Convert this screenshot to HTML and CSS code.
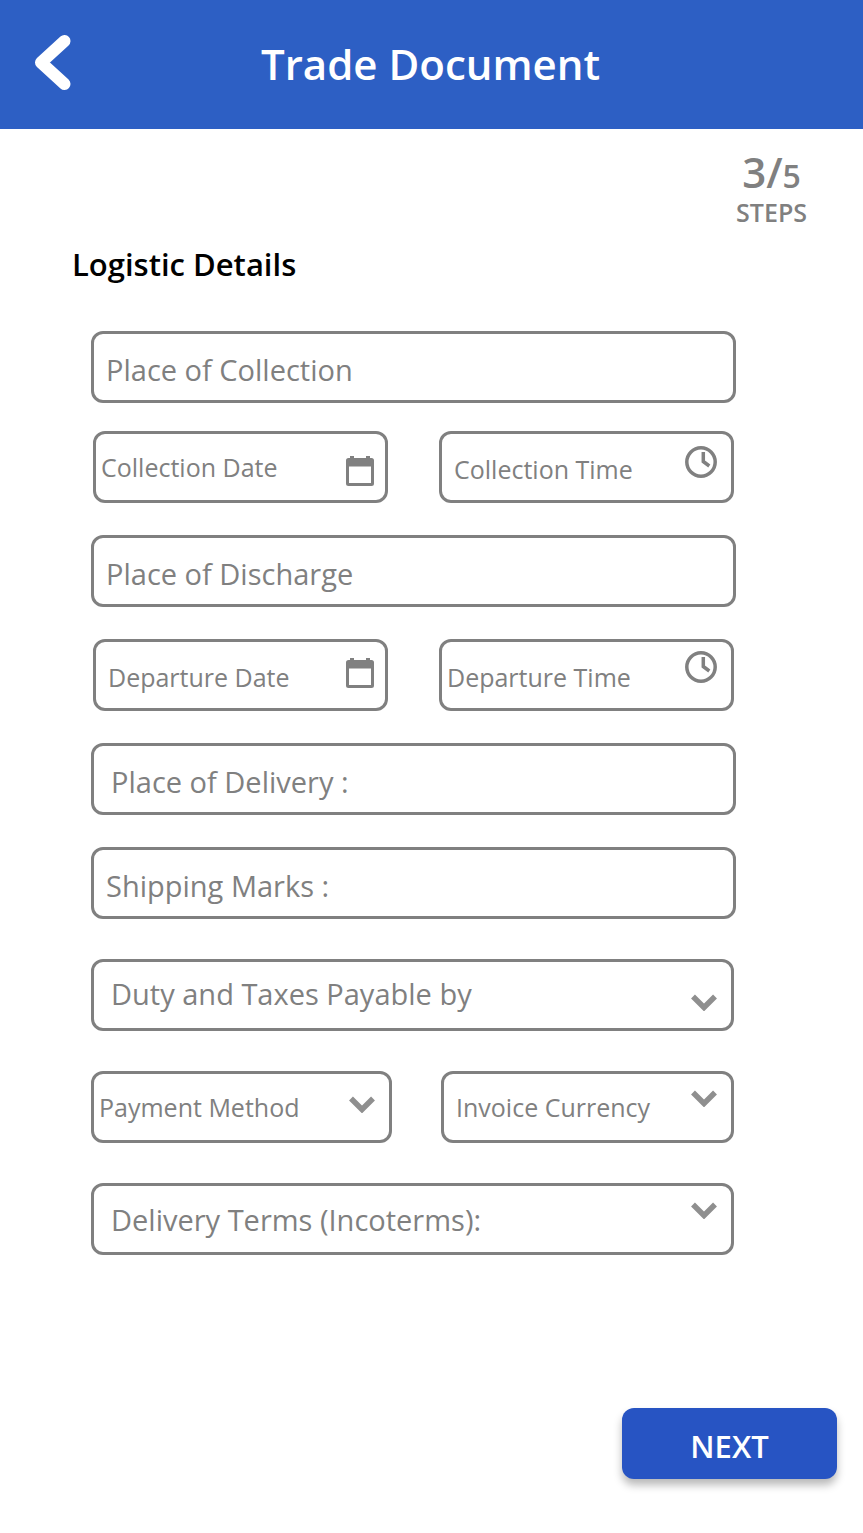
FILE: index.html
```html
<!DOCTYPE html>
<html lang="en">
<head>
<meta charset="utf-8">
<meta name="viewport" content="width=device-width, initial-scale=1">
<title>Trade Document</title>
<link rel="stylesheet" href="styles.css">
</head>
<body class="page">
<header class="topbar">
  <button class="back" type="button" aria-label="Back">
    <svg class="back-icon" viewBox="0 0 36 55" aria-hidden="true"><path d="M30 6 6.500 27.500 30 49"/></svg>
  </button>
  <h1 class="topbar-title">Trade Document</h1>
</header>
<main class="content">
  <p class="steps">
    <span class="steps-count">3/<span class="steps-total">5</span></span>
    <span class="steps-label">STEPS</span>
  </p>
  <h2 class="section-title">Logistic Details</h2>
  <form class="form" id="logistics">
    <div class="group group--lead">
      <div class="field"><input class="control control--low" type="text" placeholder="Place of Collection" aria-label="Place of Collection"></div>
    </div>
    <div class="group">
      <div class="pair">
        <div class="field">
          <input class="control control--small control--flush" type="text" placeholder="Collection Date" aria-label="Collection Date">
          <svg class="icon icon--calendar icon--low" viewBox="0 0 28 30" aria-hidden="true"><path fill-rule="evenodd" d="M4 0h4v2h12V0h4v2h1.500Q28 2 28 4.500v23Q28 30 25.500 30h-23Q0 30 0 27.500v-23Q0 2 2.500 2H4ZM3 10.500V27h22V10.500Z"/></svg>
        </div>
        <div class="field">
          <input class="control control--small control--low" type="text" placeholder="Collection Time" aria-label="Collection Time">
          <svg class="icon icon--clock icon--raised" viewBox="0 0 32 32" aria-hidden="true"><circle cx="16" cy="16" r="14.200"/><path d="M18.300 6v9.500l6 4.500"/></svg>
        </div>
      </div>
      <div class="field"><input class="control control--low" type="text" placeholder="Place of Discharge" aria-label="Place of Discharge"></div>
      <div class="pair">
        <div class="field">
          <input class="control control--small control--low" type="text" placeholder="Departure Date" aria-label="Departure Date">
          <svg class="icon icon--calendar icon--middle" viewBox="0 0 28 30" aria-hidden="true"><path fill-rule="evenodd" d="M4 0h4v2h12V0h4v2h1.500Q28 2 28 4.500v23Q28 30 25.500 30h-23Q0 30 0 27.500v-23Q0 2 2.500 2H4ZM3 10.500V27h22V10.500Z"/></svg>
        </div>
        <div class="field">
          <input class="control control--small control--flush control--low" type="text" placeholder="Departure Time" aria-label="Departure Time">
          <svg class="icon icon--clock icon--high" viewBox="0 0 32 32" aria-hidden="true"><circle cx="16" cy="16" r="14.200"/><path d="M18.300 6v9.500l6 4.500"/></svg>
        </div>
      </div>
      <div class="field"><input class="control control--roomy control--low" type="text" placeholder="Place of Delivery :" aria-label="Place of Delivery"></div>
      <div class="field"><input class="control control--low" type="text" placeholder="Shipping Marks :" aria-label="Shipping Marks"></div>
    </div>
    <div class="group group--selects">
      <div class="field">
        <select class="control control--roomy control--high" aria-label="Duty and Taxes Payable by"><option>Duty and Taxes Payable by</option></select>
        <svg class="icon icon--chevron icon--lowest" viewBox="0 0 26 17" aria-hidden="true"><path d="M2 2.500 13 13.500 24 2.500"/></svg>
      </div>
      <div class="pair pair--selects">
        <div class="field">
          <select class="control control--small control--flush" aria-label="Payment Method"><option>Payment Method</option></select>
          <svg class="icon icon--chevron icon--low" viewBox="0 0 26 17" aria-hidden="true"><path d="M2 2.500 13 13.500 24 2.500"/></svg>
        </div>
        <div class="field">
          <select class="control control--small" aria-label="Invoice Currency"><option>Invoice Currency</option></select>
          <svg class="icon icon--chevron icon--middle" viewBox="0 0 26 17" aria-hidden="true"><path d="M2 2.500 13 13.500 24 2.500"/></svg>
        </div>
      </div>
      <div class="field">
        <select class="control control--roomy" aria-label="Delivery Terms (Incoterms)"><option>Delivery Terms (Incoterms):</option></select>
        <svg class="icon icon--chevron icon--middle" viewBox="0 0 26 17" aria-hidden="true"><path d="M2 2.500 13 13.500 24 2.500"/></svg>
      </div>
    </div>
  </form>
</main>
<footer class="actions">
  <button class="next" type="submit" form="logistics">NEXT</button>
</footer>
</body>
</html>
```

FILE: styles.css
```css
* {
  box-sizing: border-box;
}

.page {
  display: flex;
  flex-direction: column;
  min-height: 100vh;
  margin: 0;
  background: #fff;
  color: #808080;
  font-family: "Open Sans", "Noto Sans", sans-serif;
}

.topbar {
  display: grid;
  grid-template-columns: 71px 1fr 73px;
  align-items: center;
  height: 129px;
  padding-bottom: 2px;
  background: #2d5fc4;
  color: #fff;
}

.back {
  justify-self: end;
  margin: 0 0 2px;
  padding: 0;
  border: 0;
  background: none;
  color: inherit;
  line-height: 0;
}

.back-icon {
  width: 37px;
  height: 55px;
  fill: none;
  stroke: currentColor;
  stroke-width: 12;
  stroke-linecap: round;
  stroke-linejoin: round;
}

.topbar-title {
  margin: 0;
  font-size: 42px;
  font-weight: 600;
  line-height: 56px;
  text-align: center;
}

.content {
  display: flex;
  flex-direction: column;
}

.steps {
  display: flex;
  flex-direction: column;
  align-self: flex-end;
  align-items: center;
  margin: 21px 56px 0 0;
  font-weight: 600;
}

.steps-count {
  font-size: 42px;
  line-height: 44px;
}

.steps-total {
  font-size: 32px;
}

.steps-label {
  font-size: 25px;
  line-height: 28px;
}

.section-title {
  margin: 18px 0 0 72px;
  color: #000;
  font-size: 31px;
  font-weight: 600;
  line-height: 40px;
}

.form {
  display: flex;
  flex-direction: column;
  margin-top: 47px;
  padding: 0 127px 0 91px;
}

.group {
  display: flex;
  flex-direction: column;
  gap: 32px;
}

.group--lead {
  margin-bottom: 28px;
}

.group--selects {
  gap: 40px;
  margin-top: 40px;
  padding-right: 2px;
}

.pair {
  display: grid;
  grid-template-columns: 1fr 1fr;
  gap: 51px;
  padding: 0 2px;
}

.pair--selects {
  grid-template-columns: 301fr 293fr;
  gap: 49px;
  padding: 0;
}

/* The control and its icon share one grid cell. */
.field {
  display: grid;
  grid-template-columns: minmax(0, 1fr);
  height: 72px;
  border: 3px solid #808080;
  border-radius: 12px;
}

.control {
  grid-area: 1 / 1;
  width: 100%;
  margin: 0;
  padding: 0 12px;
  border: 0;
  border-radius: 8px;
  background: transparent;
  color: #808080;
  font: 500 29px "Open Sans", "Noto Sans", sans-serif;
  appearance: none;
}

.control::placeholder {
  color: #808080;
  opacity: 1;
}

.control--small {
  font-size: 25px;
}

.control--flush {
  padding-left: 5px;
}

.control--roomy {
  padding-left: 17px;
}

.control--low {
  padding-top: 4px;
}

.control--high {
  padding-bottom: 4px;
}

.icon {
  grid-area: 1 / 1;
  justify-self: end;
  margin-right: 14px;
  pointer-events: none;
}

.icon--high {
  margin-top: 9px;
}

.icon--raised {
  margin-top: 12px;
}

.icon--middle {
  margin-top: 16px;
}

.icon--low {
  margin-top: 22px;
}

.icon--lowest {
  margin-top: 32px;
}

.icon--calendar {
  width: 28px;
  height: 30px;
  margin-right: 11px;
  fill: #808080;
}

.icon--clock {
  width: 32px;
  height: 32px;
  fill: none;
  stroke: #808080;
  stroke-width: 3.500;
}

.icon--chevron {
  width: 26px;
  height: 17px;
  fill: none;
  stroke: #8f8f8f;
  stroke-width: 5.500;
}

.actions {
  display: flex;
  justify-content: flex-end;
  margin-top: auto;
  padding: 40px 26px 54px;
}

.next {
  width: 215px;
  height: 71px;
  padding: 4px 0 0;
  border: 0;
  border-radius: 12px;
  background: #2754c3;
  box-shadow: 0 6px 8px rgba(0, 0, 0, 0.28);
  color: #fff;
  font: 600 31px "Open Sans", "Noto Sans", sans-serif;
}
```
